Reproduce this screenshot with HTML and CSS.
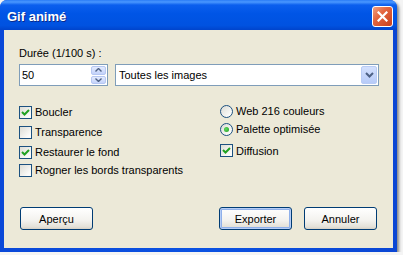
FILE: index.html
```html
<!DOCTYPE html>
<html lang="fr">
<head>
  <meta charset="UTF-8">
  <title>Gif animé</title>
  <link rel="stylesheet" href="styles.css">
</head>
<body>
  <div class="window">
    <div class="titlebar">
      <span class="title">Gif animé</span>
      <span class="close">
        <svg width="11" height="11" viewBox="0 0 11 11"><path d="M1.5 1.5 L9.5 9.5 M9.5 1.5 L1.5 9.5" stroke="#fff" stroke-width="2.2" stroke-linecap="square"/></svg>
      </span>
    </div>
    <div class="client">
      <div class="field-label">Durée (1/100 s) :</div>
      <div class="input-row">
        <div class="spin">
          <span class="spin-value">50</span>
          <div class="spin-buttons">
            <span class="spin-btn"><svg width="7" height="4" viewBox="0 0 7 4"><path d="M0.5 3.5 L3.5 0.5 L6.5 3.5" fill="none" stroke="#4d6185" stroke-width="1.4"/></svg></span>
            <span class="spin-btn"><svg width="7" height="4" viewBox="0 0 7 4"><path d="M0.5 0.5 L3.5 3.5 L6.5 0.5" fill="none" stroke="#4d6185" stroke-width="1.4"/></svg></span>
          </div>
        </div>
        <div class="combo">
          <span class="combo-value">Toutes les images</span>
          <span class="combo-btn"><svg width="9" height="6" viewBox="0 0 9 6"><path d="M1 1 L4.5 4.5 L8 1" fill="none" stroke="#4d6185" stroke-width="2"/></svg></span>
        </div>
      </div>

      <div class="options">
        <div class="col col-left">
          <div class="opt"><span class="check"><svg width="9" height="9" viewBox="0 0 9 9"><path d="M1 4 L3.5 6.5 L8 2" fill="none" stroke="#21a121" stroke-width="2"/></svg></span>Boucler</div>
          <div class="opt"><span class="check"></span>Transparence</div>
          <div class="opt"><span class="check"><svg width="9" height="9" viewBox="0 0 9 9"><path d="M1 4 L3.5 6.5 L8 2" fill="none" stroke="#21a121" stroke-width="2"/></svg></span>Restaurer le fond</div>
          <div class="opt opt-last"><span class="check"></span>Rogner les bords transparents</div>
        </div>
        <div class="col col-right">
          <div class="opt opt-radio"><span class="radio"></span>Web 216 couleurs</div>
          <div class="opt opt-radio"><span class="radio selected"></span>Palette optimisée</div>
          <div class="opt opt-gap"><span class="check"><svg width="9" height="9" viewBox="0 0 9 9"><path d="M1 4 L3.5 6.5 L8 2" fill="none" stroke="#21a121" stroke-width="2"/></svg></span>Diffusion</div>
        </div>
      </div>

      <div class="buttons">
        <div class="btn">Aperçu</div>
        <div class="right-buttons">
          <div class="btn default">Exporter</div>
          <div class="btn">Annuler</div>
        </div>
      </div>
    </div>
  </div>
</body>
</html>
```

FILE: styles.css
```css
body {
  margin: 0;
  background: #f4f4f4;
  font-family: 'Liberation Sans', Arial, sans-serif;
  font-size: 11px;
  color: #000;
}
.window {
  width: 397px;
  height: 252px;
  display: flex;
  flex-direction: column;
  background: linear-gradient(90deg, #0a48d8, #0b52e2 50%, #0a46d4);
  border-radius: 7px 7px 0 0;
  box-shadow: 2px 2px 3px rgba(0,0,0,0.45);
}
.titlebar {
  height: 30px;
  flex: none;
  display: flex;
  justify-content: space-between;
  align-items: flex-start;
  padding: 0 4px 0 7px;
  border-radius: 7px 7px 0 0;
  background: linear-gradient(#2a7cf6 0, #4a98ff 2px, #0b5fee 5px, #0055e6 45%, #0052e0 85%, #0044cc 100%);
}
.title {
  margin-top: 9px;
  line-height: 16px;
  font-size: 13px;
  font-weight: bold;
  color: #fff;
  text-shadow: 1px 1px 0 #0b2a8a;
}
.close {
  margin-top: 6px;
  width: 19px;
  height: 19px;
  border: 1px solid #fff;
  border-radius: 3px;
  display: flex;
  align-items: center;
  justify-content: center;
  background: linear-gradient(135deg, #f0a080, #e3653f 40%, #c8401c);
}
.client {
  flex: 1;
  margin: 0 4px 4px;
  background: #ece9d8;
  padding: 17px 14px 18px 15px;
  display: flex;
  flex-direction: column;
}
.field-label {
  line-height: 13px;
}
.input-row {
  display: flex;
  gap: 7px;
  margin-top: 4px;
  height: 22px;
}
.spin, .combo {
  box-sizing: border-box;
  height: 22px;
  border: 1px solid #7f9db9;
  background: #fff;
  display: flex;
  align-items: center;
  justify-content: space-between;
}
.spin {
  width: 89px;
  padding: 1px 1px 1px 2px;
}
.spin-buttons {
  align-self: stretch;
  display: flex;
  flex-direction: column;
  gap: 1px;
}
.spin-btn {
  flex: 1;
  width: 15px;
  box-sizing: border-box;
  border: 1px solid #b6c7f2;
  border-radius: 2px;
  background: linear-gradient(#e4ebfd, #c3d2fa);
  display: flex;
  align-items: center;
  justify-content: center;
}
.combo {
  flex: 1;
  padding: 1px 1px 1px 3px;
}
.combo-btn {
  align-self: stretch;
  width: 16px;
  box-sizing: border-box;
  border: 1px solid #b9ccf5;
  border-radius: 2px;
  background: linear-gradient(#d3e0fd, #b7cbf8);
  display: flex;
  align-items: center;
  justify-content: center;
}
.options {
  display: flex;
  margin-top: 16px;
}
.col-left {
  width: 201px;
}
.opt {
  height: 20px;
  display: flex;
  align-items: center;
  gap: 3px;
  white-space: nowrap;
}
.opt-last {
  margin-top: -2px;
}
.opt-radio {
  height: 18px;
}
.opt-gap {
  height: 19px;
  margin-top: 3px;
}
.check {
  box-sizing: border-box;
  width: 13px;
  height: 13px;
  border: 1px solid #1c5180;
  background: linear-gradient(135deg, #dcdcd5, #fbfbf9 80%);
  display: flex;
  align-items: center;
  justify-content: center;
}
.radio {
  box-sizing: border-box;
  width: 13px;
  height: 13px;
  border: 1px solid #1c5180;
  border-radius: 50%;
  background: linear-gradient(135deg, #dcdcd5, #fbfbf9 80%);
  display: flex;
  align-items: center;
  justify-content: center;
}
.radio.selected::after {
  content: "";
  width: 5px;
  height: 5px;
  border-radius: 50%;
  background: radial-gradient(circle at 40% 40%, #5fdc5f, #1f9a1f);
}
.buttons {
  margin-top: auto;
  display: flex;
  justify-content: space-between;
  padding: 0 2px 0 1px;
}
.right-buttons {
  display: flex;
  gap: 12px;
}
.btn {
  box-sizing: border-box;
  width: 73px;
  height: 23px;
  border: 1px solid #003c74;
  border-radius: 3px;
  background: linear-gradient(#ffffff, #f3f2ee 60%, #e4e1d8 90%, #d6d0c5);
  display: flex;
  align-items: center;
  justify-content: center;
}
.btn.default {
  box-shadow: inset 0 0 0 1px #b6cdf6, inset 0 0 0 2px #8fb0ea;
}
```
